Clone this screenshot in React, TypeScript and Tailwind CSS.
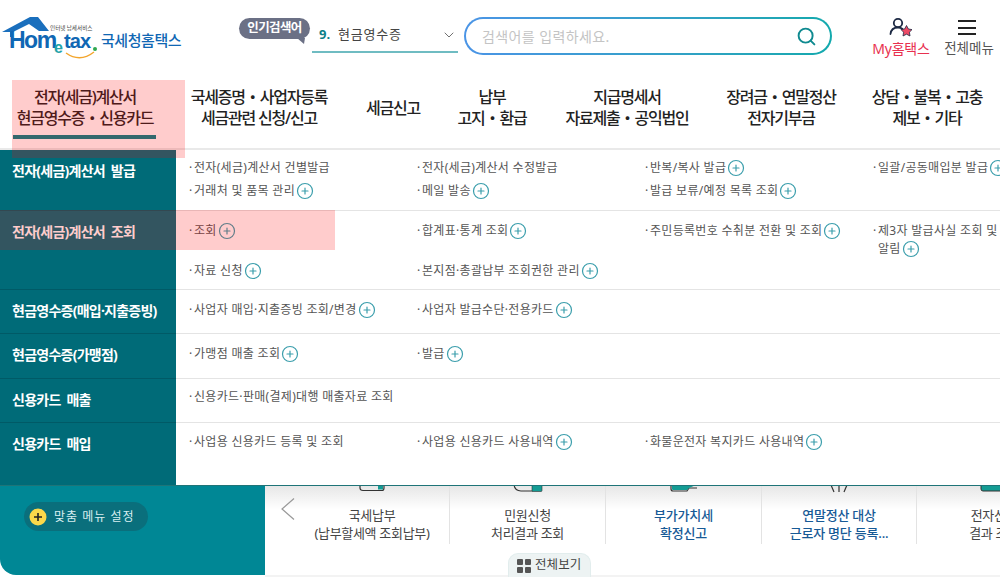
import { CirclePlus, ChevronDown, Search } from "lucide-react";

type SubItem = { text: string; plus?: boolean };

type MenuRow = {
    label: string;
    rowClass: string;
    gridClass: string;
    items: SubItem[];
};

const navItems = [
    { lines: ["전자(세금)계산서", "현금영수증・신용카드"], active: true },
    { lines: ["국세증명・사업자등록", "세금관련 신청/신고"] },
    { lines: ["세금신고"] },
    { lines: ["납부", "고지・환급"] },
    { lines: ["지급명세서", "자료제출・공익법인"] },
    { lines: ["장려금・연말정산", "전자기부금"] },
    { lines: ["상담・불복・고충", "제보・기타"] },
];

const menuRows: MenuRow[] = [
    {
        label: "전자(세금)계산서 발급",
        rowClass: "h-[60px]",
        gridClass: "pt-[9px] grid-rows-[23px_23px]",
        items: [
            { text: "전자(세금)계산서 건별발급" },
            { text: "전자(세금)계산서 수정발급" },
            { text: "반복/복사 발급", plus: true },
            { text: "일괄/공동매입분 발급", plus: true },
            { text: "거래처 및 품목 관리", plus: true },
            { text: "메일 발송", plus: true },
            { text: "발급 보류/예정 목록 조회", plus: true },
        ],
    },
    {
        label: "전자(세금)계산서 조회",
        rowClass: "h-[79px]",
        gridClass: "pt-[11px] grid-rows-[40px_28px]",
        items: [
            { text: "조회", plus: true },
            { text: "합계표·통계 조회", plus: true },
            { text: "주민등록번호 수취분 전환 및 조회", plus: true },
            { text: "제3자 발급사실 조회 및\n알림", plus: true },
            { text: "자료 신청", plus: true },
            { text: "본지점·총괄납부 조회권한 관리", plus: true },
        ],
    },
    {
        label: "현금영수증(매입·지출증빙)",
        rowClass: "h-[44px]",
        gridClass: "pt-[11px]",
        items: [
            { text: "사업자 매입·지출증빙 조회/변경", plus: true },
            { text: "사업자 발급수단·전용카드", plus: true },
        ],
    },
    {
        label: "현금영수증(가맹점)",
        rowClass: "h-[45px]",
        gridClass: "pt-[11px]",
        items: [
            { text: "가맹점 매출 조회", plus: true },
            { text: "발급", plus: true },
        ],
    },
    {
        label: "신용카드 매출",
        rowClass: "h-[44px]",
        gridClass: "pt-[9px]",
        items: [{ text: "신용카드·판매(결제)대행 매출자료 조회" }],
    },
    {
        label: "신용카드 매입",
        rowClass: "h-[63px]",
        gridClass: "pt-[10px]",
        items: [
            { text: "사업용 신용카드 등록 및 조회" },
            { text: "사업용 신용카드 사용내역", plus: true },
            { text: "화물운전자 복지카드 사용내역", plus: true },
        ],
    },
];

const quickCards = [
    { lines: ["국세납부", "(납부할세액 조회납부)"], w: "w-[155px]" },
    { lines: ["민원신청", "처리결과 조회"], w: "w-[156px]" },
    { lines: ["부가가치세", "확정신고"], w: "w-[156px]", blue: true },
    { lines: ["연말정산 대상", "근로자 명단 등록..."], w: "w-[155px]", blue: true },
    { lines: ["전자신고", "결과 조회"], w: "w-[155px]" },
];

function Logo() {
    return (
        <svg width="100" height="48" viewBox="0 0 100 48" className="shrink-0">
            <path d="M1 17 L29 2 L37 2 L48 16 L38 16 L28 9 L12 17 L12 22 L9 22 L9 17 Z" fill="#1a6fbd" />
            <text x="49" y="14.5" fontSize="5.6" fill="#444" fontFamily="'Noto Sans CJK KR', sans-serif">인터넷 납세서비스</text>
            <text x="8" y="33" fontSize="23" fontWeight="700" letterSpacing="-1.5" fill="#1067b4" fontFamily="'Liberation Sans', sans-serif">Hom</text>
            <text x="53" y="38" fontSize="16" fontWeight="700" fill="#25a3a9" fontFamily="'Liberation Sans', sans-serif">e</text>
            <text x="63" y="33" fontSize="20" fontWeight="700" letterSpacing="-0.9" fill="#1067b4" fontFamily="'Liberation Sans', sans-serif">tax</text>
            <circle cx="94" cy="34" r="2" fill="#2fa84f" />
            <path d="M65 38 Q79 48 93 37" fill="none" stroke="#f3a52c" strokeWidth="1.4" />
        </svg>
    );
}

function UserStar() {
    return (
        <svg width="24" height="22" viewBox="0 0 24 22">
            <circle cx="9" cy="6" r="4.2" fill="none" stroke="#1d2a44" strokeWidth="1.8" />
            <path d="M1.5 17 C2 12.5 5 10.5 9 10.5 C11 10.5 12.5 11 13.5 12" fill="none" stroke="#1d2a44" strokeWidth="1.8" strokeLinecap="round" />
            <path d="M17.5 8.5 L19.4 12 L23 12.6 L20.4 15.2 L21 19 L17.5 17.2 L14 19 L14.6 15.2 L12 12.6 L15.6 12 Z" fill="#ee4a66" stroke="#1d2a44" strokeWidth="0.8" />
        </svg>
    );
}

function PopularSearch() {
    return (
        <div className="flex items-start shrink-0 ml-[57px]">
            <div className="relative mt-[18px] h-[21px] w-[71px] rounded-full bg-[#6b7085] text-center text-[12.5px] font-bold leading-[20px] tracking-[-0.6px] text-white">
                인기검색어
                <svg width="8" height="6" viewBox="0 0 8 6" className="absolute right-[5px] top-[20px]">
                    <path d="M0 0 L8 0 L7 6 Z" fill="#6b7085" />
                </svg>
            </div>
            <div className="ml-[2px] mt-[18px] flex h-[35px] w-[146px] items-center border-b-2 border-[#6fbcc2] pl-[7px] text-[13px] text-[#444]">
                <span className="w-[19px] font-bold text-[#0c7f88]">9.</span>
                <span className="tracking-[0.8px]">현금영수증</span>
                <ChevronDown size={16} strokeWidth={1.4} className="ml-auto mr-[1px] text-[#666]" />
            </div>
        </div>
    );
}

function SearchBox() {
    return (
        <div className="ml-[6px] mt-[17px] h-[38px] w-[368px] shrink-0 rounded-full bg-gradient-to-r from-[#4a94e6] to-[#12a9ad] p-[2px]">
            <div className="flex h-full items-center rounded-full bg-white pl-[16px] pr-[13px]">
                <span className="text-[14px] tracking-[0.4px] text-[#c4c4c4]">검색어를 입력하세요.</span>
                <Search size={21} strokeWidth={2.2} className="ml-auto text-[#0f8a90]" />
            </div>
        </div>
    );
}

function Header() {
    return (
        <div className="flex h-[80px]">
            <div className="ml-[1px] mt-[15px] flex h-[48px] w-[181px] shrink-0 items-start">
                <Logo />
                <span className="mt-[14px] whitespace-nowrap text-[15px] font-medium tracking-[-0.45px] text-[#1067b4]">국세청홈택스</span>
            </div>
            <PopularSearch />
            <SearchBox />
            <div className="ml-[39px] mt-[17px] flex w-[60px] shrink-0 flex-col items-center">
                <UserStar />
                <span className="mt-[1px] whitespace-nowrap text-[14px] leading-[18px] tracking-[-0.2px] text-[#e8314f]">My홈택스</span>
            </div>
            <div className="ml-[12px] mt-[17px] flex w-[52px] shrink-0 flex-col items-center">
                <div className="-ml-[5px] mt-[3px] mb-[4px] flex h-[15px] w-[18px] flex-col justify-between">
                    <span className="h-[2px] bg-[#222]" />
                    <span className="h-[2px] bg-[#222]" />
                    <span className="h-[2px] bg-[#222]" />
                </div>
                <span className="whitespace-nowrap text-[13.5px] leading-[18px] text-[#555]">전체메뉴</span>
            </div>
        </div>
    );
}

function Nav() {
    return (
        <div className="grid h-[70px] grid-cols-[170px_178px_90px_108px_162px_146px_146px] border-b-2 border-[#e9e9e9]">
            {navItems.map((item) => (
                <div key={item.lines[0]} className="relative flex flex-col items-center pt-[7px]">
                    <div className="flex h-[42px] flex-col justify-center">
                        {item.lines.map((line) => (
                            <div key={line} className="whitespace-nowrap text-center text-[16px] font-medium leading-[21px] tracking-[-1.2px] text-[#222]">
                                {line}
                            </div>
                        ))}
                    </div>
                    {item.active && <div className="absolute left-[13px] top-[55px] h-[4px] w-[143px] bg-[#008389]" />}
                </div>
            ))}
        </div>
    );
}

function MegaMenu() {
    return (
        <div className="absolute left-0 top-0 z-10 w-[1000px] overflow-hidden border-b border-[#1f7478] bg-white">
            {menuRows.map((row, i) => (
                <div key={row.label} className={`flex ${row.rowClass} ${i > 0 ? "border-t border-[#e4e4e4]" : ""}`}>
                    <div className={`w-[176px] shrink-0 bg-[#006b78] ${i > 0 ? "-mt-px border-t border-[#005a66]" : ""}`}>
                        <div className="flex h-[40px] items-center pl-[12px] text-[14px] font-bold tracking-[-0.75px] text-white [word-spacing:3px]">
                            <span className="whitespace-nowrap">{row.label}</span>
                        </div>
                    </div>
                    <div className={`grid flex-1 grid-cols-[228px_228px_228px_140px] ${row.gridClass}`}>
                        {row.items.map((item) => (
                            <div key={item.text} className="flex items-start pl-[13px] text-[12px] leading-[18px] tracking-[0.3px] text-[#555]">
                                <span className="w-[5px] shrink-0">·</span>
                                <span className="whitespace-pre">
                                    {item.text}
                                    {item.plus && <CirclePlus size={18} strokeWidth={1.6} className="ml-px inline-block align-[-5px] text-[#3b9eac]" />}
                                </span>
                            </div>
                        ))}
                    </div>
                </div>
            ))}
        </div>
    );
}

// only the bottom edge of each card icon shows below the dropdown
function CardIcon({ index }: { index: number }) {
    return (
        <svg width="30" height="8" viewBox="0 0 30 8" className="mx-auto">
            {index === 0 && (
                <>
                    <path d="M3 0 V3 Q3 5.5 6 5.5 H25 Q27 5.5 27 3 V0" stroke="#333" strokeWidth="1.2" fill="none" />
                    <rect x="21" y="0" width="5" height="4.5" fill="#149c94" />
                </>
            )}
            {index === 1 && (
                <>
                    <path d="M1 0 Q2 6 8 6 H20" stroke="#333" strokeWidth="1.2" fill="none" />
                    <rect x="19" y="0" width="10" height="6.5" rx="1" fill="#149c94" stroke="#333" strokeWidth="0.6" />
                </>
            )}
            {index === 2 && (
                <>
                    <path d="M2 0 V4 Q2 6 4 6 H18 L20 3 H28" stroke="#333" strokeWidth="1.2" fill="none" />
                    <path d="M3 0 H27 L20 3 L18 5 H4 Q3 5 3 4 Z" fill="#149c94" />
                </>
            )}
            {index === 3 && <path d="M7 0 L10 7 M15 1 L15 7 M23 0 L20 7" stroke="#333" strokeWidth="1.2" fill="none" />}
            {index === 4 && (
                <path d="M2 0 V4 Q2 6 4 6 H30 V0 Z" fill="#149c94" stroke="#333" strokeWidth="1" />
            )}
        </svg>
    );
}

function QuickCards() {
    return (
        <div className="flex min-w-0 flex-1 flex-col">
            <div className="mt-auto flex h-[61px] bg-gradient-to-b from-[#e6e6e6] to-white to-40%">
                <div className="flex w-[30px] shrink-0 items-start pt-[13px]">
                    <svg width="14" height="22" viewBox="0 0 14 22" className="ml-[16px]">
                        <path d="M13 0.5 L1 11 L13 21.5" fill="none" stroke="#999" strokeWidth="1.2" />
                    </svg>
                </div>
                <div className="flex h-[59px] overflow-hidden">
                    {quickCards.map((card, i) => (
                        <div key={card.lines[0]} className={`${card.w} shrink-0 border-r border-[#e3e3e3] text-center`}>
                            <CardIcon index={i} />
                            <div className="pt-[14px]">
                                {card.lines.map((line) => (
                                    <div
                                        key={line}
                                        className={`whitespace-nowrap text-[13px] leading-[17.5px] ${card.blue ? "font-medium tracking-[-0.2px] text-[#175a96]" : "tracking-[-0.3px] text-[#444]"}`}
                                    >
                                        {line}
                                    </div>
                                ))}
                            </div>
                        </div>
                    ))}
                </div>
            </div>
            <div className="h-[31px] border-b-2 border-[#f3f3f3] pl-[243px]">
                <div className="mt-[7px] flex h-[24px] w-[83px] items-center gap-[4px] rounded-t-[10px] border border-b-0 border-[#e2eded] bg-[#edf3f3] pl-[8px] text-[12.5px] tracking-[0.1px] text-[#444]">
                    <div className="grid grid-cols-2 gap-[2px]">
                        <span className="h-[6px] w-[6px] rounded-[1px] bg-[#555]" />
                        <span className="h-[6px] w-[6px] rounded-[1px] bg-[#555]" />
                        <span className="h-[6px] w-[6px] rounded-[1px] bg-[#555]" />
                        <span className="h-[6px] w-[6px] rounded-[1px] bg-[#555]" />
                    </div>
                    전체보기
                </div>
            </div>
        </div>
    );
}

export default function App() {
    return (
        <div className="relative h-[577px] w-[1000px] overflow-hidden bg-white font-['Noto_Sans','Noto_Sans_CJK_KR',sans-serif]">
            <Header />
            <Nav />
            <div className="relative flex h-[427px]">
                <MegaMenu />
                <div className="flex h-[425px] w-[265px] shrink-0 flex-col justify-end rounded-bl-[16px] bg-[#008795] pb-[44px] pl-[24px]">
                    <div className="flex h-[29px] w-[124px] items-center gap-[7px] rounded-full bg-[#0a6f7c] pl-[5px] text-[12px] tracking-[1px] text-[#d8eef0]">
                        <svg width="18" height="18" viewBox="0 0 18 18" className="shrink-0">
                            <circle cx="9" cy="9" r="8.5" fill="#fbd84a" />
                            <path d="M5 9 H13 M9 5 V13" stroke="#222" strokeWidth="1.6" />
                        </svg>
                        맞춤 메뉴 설정
                    </div>
                </div>
                <QuickCards />
            </div>
            <div className="absolute left-[12px] top-[80px] z-20 h-[78px] w-[173px] bg-[rgba(255,0,0,0.2)]" />
            <div className="absolute left-0 top-[210px] z-20 h-[40px] w-[335px] bg-[rgba(255,0,0,0.2)]" />
        </div>
    );
}
